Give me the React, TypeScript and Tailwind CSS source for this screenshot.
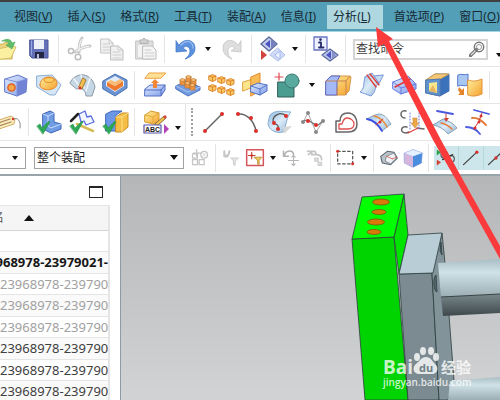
import type { ReactNode } from "react";
import { clsx } from "clsx";

const MENUS = [
  { label: "视图", accel: "V" },
  { label: "插入", accel: "S" },
  { label: "格式", accel: "R" },
  { label: "工具", accel: "T" },
  { label: "装配", accel: "A" },
  { label: "信息", accel: "I" },
  { label: "分析", accel: "L", active: true },
  { label: "首选项", accel: "P" },
  { label: "窗口", accel: "O" },
];

const PARTS = [
  { name: "", tone: "" },
  { name: "968978-23979021-", tone: "font-bold text-neutral-900" },
  { name: "23968978-239790", tone: "text-neutral-400" },
  { name: "23968978-239790", tone: "text-neutral-400" },
  { name: "23968978-239790", tone: "text-neutral-400" },
  { name: "23968978-239790", tone: "text-neutral-700" },
  { name: "23968978-239790", tone: "text-neutral-700" },
  { name: "23968978-239790", tone: "text-neutral-700" },
];

// Toolbar building blocks
interface ToolProps {
  label: string;
  small?: boolean;
  on?: boolean;
  children: ReactNode;
}

function Tool({ label, small, on, children }: ToolProps) {
  return (
    <button
      type="button"
      aria-label={label}
      className={clsx(
        "flex h-6 shrink-0 items-center justify-center",
        !small && "w-[33px]",
        small && !on && "w-6",
        on && "w-[25px] border-r border-[#b5d8e0] bg-[#cde6ec]"
      )}
    >
      <svg
        viewBox="0 0 24 24"
        className={clsx("shrink-0 overflow-visible", small ? "h-5 w-5" : "h-6 w-6")}
        fill="none"
        strokeLinejoin="round"
        strokeLinecap="round"
      >
        {children}
      </svg>
    </button>
  );
}

function Separator() {
  return (
    <div className="flex w-[7px] shrink-0 justify-center">
      <div className="h-7 w-px bg-neutral-200" />
    </div>
  );
}

function Drop({ label, className = "w-3.5" }: { label: string; className?: string }) {
  return (
    <button
      type="button"
      aria-label={label}
      className={clsx("flex h-6 shrink-0 items-center justify-center", className)}
    >
      <svg viewBox="0 0 6 4" className="h-1 w-1.5" fill="#111">
        <path d="M0 0h6L3 4z" />
      </svg>
    </button>
  );
}

function Check() {
  return <path d="M0 16l3-2 2 4L12 11l1 1L6 24z" fill="#2fa855" stroke="#1c8a40" strokeWidth=".5" />;
}

function Gradients() {
  return (
    <svg className="absolute h-0 w-0" aria-hidden="true">
      <defs>
        <linearGradient id="blue" x1="0" y1="0" x2="1" y2="1">
          <stop offset="0" stopColor="#e3edff" />
          <stop offset="1" stopColor="#7d9be8" />
        </linearGradient>
        <linearGradient id="gold" x1="0" y1="0" x2="1" y2="1">
          <stop offset="0" stopColor="#fff0a0" />
          <stop offset="1" stopColor="#f5a02c" />
        </linearGradient>
        <linearGradient id="sheet" x1="0" y1="0" x2="1" y2="1">
          <stop offset="0" stopColor="#8db9e0" />
          <stop offset=".5" stopColor="#dcecf8" />
          <stop offset="1" stopColor="#8fb2d6" />
        </linearGradient>
      </defs>
    </svg>
  );
}

function Dot({ x, y, r = 2 }: { x: number; y: number; r?: number }) {
  return <circle cx={x} cy={y} r={r} fill="#d8312b" />;
}

function MiniCube({ x, y }: { x: number; y: number }) {
  return (
    <g transform={`translate(${x} ${y})`} stroke="#d8791f" strokeWidth=".8">
      <path d="M0 2l3.500-1.500L7 2v4L3.500 7.500 0 6z" fill="#fbc763" />
      <path d="M0 2l3.500 1.200L7 2M3.500 3.200v4" />
    </g>
  );
}

function MenuBar() {
  return (
    <nav className="box-content flex h-[29px] shrink-0 items-center gap-[7px] overflow-hidden border-t-2 border-b border-t-neutral-700 border-b-[#a5d5e3] bg-[#549fb8] pl-2.5 text-xs text-[#152a33]">
      {MENUS.map((menu) => (
        <button
          key={menu.accel}
          type="button"
          className={clsx(
            "shrink-0 whitespace-nowrap",
            menu.active ? "h-6 bg-[#aed7e0] pr-3 pl-1.5" : "px-1"
          )}
        >
          {menu.label}(<span className="underline">{menu.accel}</span>)
        </button>
      ))}
    </nav>
  );
}

function StandardBar() {
  return (
    <div className="flex h-[35px] shrink-0 items-center overflow-hidden border-b border-neutral-200">
      <div className="-ml-[11px] flex shrink-0 items-center">
        <Tool label="打开">
          <path d="M0 7h9l2-2 8 3-1 14H0z" fill="#e8d37a" stroke="#cdb75c" />
          <path d="M0 13l17-4 5 1-5 11-17 2z" fill="#fbefa0" stroke="#d4bf68" />
          <path d="M8 4c5-3 9-2 10 2l3-1-3 7-6-4 3-1c-1-3-4-3-7-3z" fill="#62bd68" stroke="#4fa85c" strokeWidth=".6" />
        </Tool>
        <Tool label="保存">
          <path d="M3 3h18v18H5l-2-2z" fill="#6470b8" stroke="#4a549c" />
          <path d="M7 3h10v9H7z" fill="#eef0f8" />
          <path d="M8 15h9v6H8z" fill="#222742" />
          <path d="M10 17h2v4h-2z" fill="#b8bfe0" />
          <path d="M4.500 4v14" stroke="#9aa6e2" />
        </Tool>
        <Separator />
        <Tool label="剪切">
          <path d="M15 1c-2 3-3 8-3 14M23 9c-6 0-10 3-15 6" stroke="#c4c4c4" strokeWidth="3" />
          <path d="M15 2c-2 3-3 7-3 12M22 9.500c-6 0-9 2-13 5" stroke="#f0f0f0" strokeWidth="1.300" />
          <circle cx="4" cy="14" r="2.600" stroke="#bdbdbd" strokeWidth="1.500" />
          <circle cx="11" cy="20" r="2.800" stroke="#bdbdbd" strokeWidth="1.500" />
        </Tool>
        <Tool label="复制">
          <path d="M1 2h8l4 4v10H1z" fill="#f1f1f1" stroke="#c4c4c4" />
          <path d="M9 2v4h4M3 7h6M3 10h8M3 13h7" stroke="#ccc" />
          <path d="M11 9h7l5 4v10H11z" fill="#f1f1f1" stroke="#bbb" />
          <path d="M18 9v4h5M13 15h7M13 18h8M13 21h8" stroke="#ccc" />
        </Tool>
        <Tool label="粘贴">
          <path d="M3 4h17v18H3z" fill="#ddd" stroke="#c4c4c4" />
          <path d="M5 8h13v12H5z" fill="#f4f4f4" />
          <path d="M7 6V3h2l2-2 2 2h2v3z" fill="#d0d0d0" stroke="#b0b0b0" />
          <path d="M10 9h9l4 4v9H10z" fill="#f5f5f5" stroke="#bbb" />
          <path d="M12 13h6M12 16h9M12 19h9" stroke="#ccc" />
        </Tool>
        <Separator />
        <Tool label="撤消">
          <path d="M3 4v11l11-1-4-3c3-3 7-1 7 3 0 3-2 6-5 8 6-2 10-5 10-11C22 3 12 0 6 8z" fill="#5c91dd" stroke="#3c70c4" strokeWidth=".7" />
          <path d="M8 8c5-6 12-4 12 3" stroke="#94b9ee" strokeWidth="1.500" />
        </Tool>
        <Drop label="撤消列表" />
        <Tool label="重做">
          <path d="M21 4v11l-10-1 4-3c-3-3-7-1-7 3 0 3 1 6 4 8-5-2-9-5-9-11C3 3 12 0 18 8z" fill="#dedede" stroke="#c0c0c0" strokeWidth=".7" />
        </Tool>
        <Separator />
        <Tool label="命令重复">
          <path d="M9 0l8 7-8 7-8-7z" fill="#c8d0ec" stroke="#5b699c" strokeWidth="1.500" />
          <path d="M11 2l5 5-5 5z" fill="#7480c0" />
          <path d="M5 7l5-4v8z" fill="#4b52c2" />
          <path d="M18 11l7 7-7 6-8-6z" fill="#cfdaf8" stroke="#b0bfea" />
          <path d="M15 18l5-4v8z" fill="#eef3ff" stroke="#a7b9ee" />
          <path d="M1 13v10l6-5z" fill="#d1433f" />
        </Tool>
        <Drop label="命令列表" />
        <Separator />
        <Tool label="命令信息">
          <path d="M0 0h13v13H0z" fill="#edf0ff" stroke="#6a72c4" strokeWidth="1.300" />
          <path d="M5 5.500h2v5M5 10.500h4.500" stroke="#252a68" strokeWidth="1.800" />
          <circle cx="6.500" cy="2.600" r="1.300" fill="#252a68" />
          <path d="M16 12l8 6-8 6-8-6z" fill="#bcc7ee" stroke="#5b699c" strokeWidth="1.300" />
          <path d="M18 14l4 4-4 4z" fill="#8590cc" />
          <path d="M12 18l5-4v8z" fill="#4b52c2" />
        </Tool>
        <Separator />
      </div>
      <label className="ml-1 flex h-[21px] w-[135px] shrink-0 items-center border-2 border-neutral-300 bg-white px-px">
        <input
          type="text"
          aria-label="查找命令"
          defaultValue="查找命令"
          className="w-0 min-w-0 flex-1 text-xs text-neutral-700 outline-none"
        />
        <svg viewBox="0 0 16 16" className="h-4 w-4 shrink-0" fill="none">
          <path d="M1.500 14.500l6-6" stroke="#777" strokeWidth="3.500" strokeLinecap="round" />
          <path d="M2 14l5-5" stroke="#ddd" strokeWidth="1.300" />
          <circle cx="10" cy="6" r="4.700" stroke="#777" strokeWidth="1.500" />
          <circle cx="10" cy="6" r="2.500" stroke="#999" />
        </svg>
      </label>
      <Drop label="更多" className="ml-1 w-3.5 pt-3" />
    </div>
  );
}

function FeatureBar() {
  return (
    <div className="flex h-[37px] shrink-0 items-center overflow-hidden border-b border-neutral-200">
      <div className="-ml-px flex shrink-0 items-center">
        <Tool label="拉伸">
          <path d="M1 6l13-4 9 4-1 13-9 4-12-4z" fill="url(#blue)" stroke="#6276c8" />
          <path d="M13 9l10-3-1 13-9 4z" fill="#7282d5" />
          <path d="M1 6l12 3v14M13 9l10-3" stroke="#7e94df" />
          <circle cx="7.500" cy="14.500" r="3.600" fill="#f6a84b" stroke="#e25f1d" strokeWidth="1.500" />
        </Tool>
        <Tool label="凸台">
          <path d="M0 3l15-1 9 10-6 10h-5L0 14z" fill="#d5e7f6" stroke="#89aed7" />
          <path d="M3 12c0-4 3-8 9-8 5 0 8 3 8 7 0 7-17 8-17 1z" fill="url(#gold)" stroke="#e6892a" />
          <ellipse cx="12" cy="7" rx="5" ry="2.500" fill="#fccd64" stroke="#e98d2c" />
        </Tool>
        <Tool label="扫掠">
          <path d="M0 10C5-2 22-1 25 14l-3 9h-6c0-6-5-9-9-7z" fill="#c5d7e5" stroke="#8999a6" />
          <path d="M4 6l7 9M11 2l3 13M20 5l-4 13" stroke="#eef4f9" strokeWidth="1.500" />
          <path d="M13 5l3 2-4 9-3-2z" fill="#f1be4c" stroke="#a67a35" />
          <Dot x={10} y={15} r={1.5} />
        </Tool>
        <Tool label="腔体">
          <path d="M0 8l12-7 12 6v8l-12 8-12-7z" fill="#6d93d2" stroke="#4a73b4" />
          <path d="M3 8l9-5 9 5v5l-9 6-9-6z" fill="#e1edf9" />
          <path d="M4 9l8 4 8-5v5l-8 5-8-5z" fill="#ef792d" />
          <path d="M4 9l4-2 4 2 5-3 3 2-8 5z" fill="#f9ba71" />
        </Tool>
        <Separator />
        <Tool label="偏置曲面">
          <path d="M2 5l4-5h17l-5 5z" fill="#fbe096" stroke="#efa144" />
          <path d="M2 16l5-4h15v5l-4 6H2z" fill="url(#blue)" stroke="#5370c4" />
          <path d="M2 17h16l4-5M18 17v5" stroke="#536cc5" />
          <path d="M12 6l4 4h-2v5h-4v-5H8z" fill="#f08835" />
        </Tool>
        <Tool label="阵列特征">
          <path d="M0 13l10-5 14 6v3l-12 6-12-7z" fill="#739bdf" stroke="#4b72c2" />
          <path d="M0 13l12 6 12-5" stroke="#a9c5f4" />
          {[[4, 7], [10, 4], [9, 10], [15, 7], [14, 12]].map(([x, y]) => (
            <g key={`${x}-${y}`} fill="#e99542" stroke="#b86b26" strokeWidth=".6">
              <path d={`M${x} ${y}v5h5v-5z`} />
              <ellipse cx={x + 2.5} cy={y} rx="2.500" ry="1.500" fill="#f8bf72" />
            </g>
          ))}
        </Tool>
        <Tool label="阵列几何">
          <MiniCube x={0} y={1} />
          <MiniCube x={9} y={3} />
          <MiniCube x={18} y={5} />
          <MiniCube x={0} y={11} />
          <MiniCube x={9} y={13} />
          <MiniCube x={18} y={15} />
        </Tool>
        <Tool label="修剪体">
          <path d="M1 9l10-3v8l-10 4z" fill="#fce58b" stroke="#e0a23c" />
          <path d="M9 4l9-4v18l-9 5z" fill="#f8ba55" stroke="#e58c30" />
          <path d="M9 13l7-3 9 2v6l-7 4-9-3z" fill="url(#blue)" stroke="#5371c0" />
          <path d="M9 13l9 3 7-4M18 16v6" stroke="#5878c8" />
        </Tool>
        <Tool label="合并">
          <path d="M3 9h16v15H3z" fill="#4b9c91" stroke="#315e59" />
          <circle cx="17" cy="8" r="7" fill="#5baaa0" stroke="#3b7771" />
          <path d="M4 0v7M0 4h8" stroke="#dc4a50" strokeWidth="1.200" />
        </Tool>
        <Drop label="布尔列表" className="w-[18px]" />
        <Tool label="抽取体">
          <path d="M0 8l5-5h18l2 1-2 14-4 4H0z" fill="url(#gold)" stroke="#d79745" />
          <path d="M0 8l5-5h9l-3 5v14H0z" fill="#a4b9f5" stroke="#5969c9" />
          <path d="M0 8h20l4-5M20 8v14M11 22v-7" stroke="#c78356" />
        </Tool>
        <Tool label="修剪片体">
          <path d="M6 4l7-4 7 10c-5 3-2 8-8 13L1 19c5-4 3-8 5-15z" fill="url(#sheet)" stroke="#799bdc" />
          <path d="M20 10l-5-7 9-1z" fill="#c7dcf2" stroke="#7795d5" />
          <path d="M8 2l9 12M11 1l9 11" stroke="#dc3c37" strokeWidth="1.300" />
        </Tool>
        <Tool label="分割面">
          <path d="M1 9l15-6 8 8v5l-15 5-8-5z" fill="url(#blue)" stroke="#667be0" />
          <path d="M1 9l8 6 15-4M9 15v6" stroke="#667be0" />
          <path d="M3 14l15-8" stroke="#df383b" strokeWidth="1.500" />
        </Tool>
        <Tool label="抽壳">
          <path d="M1 7l9-6h14v17l-9 5-14-3z" fill="#80add5" stroke="#5479ae" />
          <path d="M15 6l9-5v17l-9 5z" fill="#3c72ba" />
          <path d="M1 7l9-6h14l-9 5z" fill="#f3c878" stroke="#d3a04e" />
          <path d="M1 7l14-1v17l-14-3z" fill="#5f93cf" stroke="#5479ae" />
          <path d="M4 10l8-1v11l-8-2z" fill="#f9e78c" />
          <path d="M4 18l4-6 4 8z" fill="#e7b35c" />
        </Tool>
        <Tool label="替换面">
          <path d="M0 2c3-2 7 1 10-1v11c-3 2-7-1-10 1z" fill="#a7c7f2" stroke="#5679d1" />
          <path d="M10 7c5 2 9 1 14-1v15c-5 2-9 3-14 1z" fill="url(#gold)" stroke="#e19139" />
          <path d="M1 14l3 3 2-2v7H0l2-2-2-3z" fill="#e6842c" />
        </Tool>
        <Separator />
        <Tool label="圆角">
          <path d="M3 22V11C3 5 8 1 15 2v10l-4 10z" fill="#a9c4ef" stroke="#5879c5" />
          <path d="M3 10c0-5 5-9 12-8v7l-12 5z" fill="#f6a26d" stroke="#d95934" />
        </Tool>
      </div>
    </div>
  );
}

function CurveBar() {
  return (
    <div className="flex h-[37px] shrink-0 items-center overflow-hidden border-b border-neutral-200">
      <div className="-ml-2 flex shrink-0 items-center">
        <Tool label="标签">
          <path d="M-4 12l18-6 4 3-1 5-18 6-7-4z" fill="#fbedbb" stroke="#d1ad68" />
          <path d="M1 13l12-4M2 16l12-4" stroke="#a88559" strokeWidth="1.300" />
          <path d="M16 9c5-2 8 2 7 9" stroke="#888" />
          <Dot x={16} y={9} r={1.2} />
        </Tool>
        <Separator />
        <Tool label="装配约束">
          <path d="M6 4l7-3 4 2v9l7 2v5l-10 4-8-4z" fill="#709ce4" stroke="#3e64ba" />
          <path d="M6 4l5 2v10l3 2 10-4M11 6l6-3" stroke="#c8ddff" />
          <Check />
        </Tool>
        <Tool label="移动组件">
          <path d="M7 14l16 7" stroke="#d6bc57" strokeWidth="2.500" />
          <path d="M9 4l6-3 2 6 4-1 3 6-8 3-2-4-3 1z" fill="#f4f7ff" stroke="#5a6de2" strokeWidth="1.300" />
          <path d="M1 11l7-7" stroke="#222" strokeWidth="2.500" />
          <Check />
        </Tool>
        <Tool label="添加组件">
          <path d="M3 4l6-3h10l-6 4v16H3z" fill="#6b98e6" stroke="#3c66bb" />
          <path d="M13 7l6-4h6v14l-6 5h-6z" fill="#f4be45" stroke="#c98b28" />
          <path d="M13 7h6l6-4M19 7v15" stroke="#fae191" />
          <Check />
        </Tool>
        <Separator />
        <Tool label="编辑文本">
          <path d="M2 5l6-4 8 2v8l-6 3-8-2z" fill="url(#gold)" stroke="#d49a2b" />
          <path d="M2 5l8 2 6-4M10 7v7" stroke="#e2aa38" />
          <path d="M12 14l9-8 2 2-9 8z" fill="#f1c64e" stroke="#8f6b3a" />
          <path d="M20 7l2-2 2 2-2 2z" fill="#d4453c" />
          <path d="M1 15h17v8H1z" fill="#fff" stroke="#5754a8" strokeWidth="1.200" />
          <path d="M21 14v10l5-5z" fill="#b544b8" />
          <text x="2" y="22" fontSize="7" fontWeight="700" fill="#222" fontFamily="Liberation Sans, sans-serif">ABC</text>
        </Tool>
        <Drop label="文本列表" className="w-3.5 pt-3" />
      </div>
      <div className="flex h-full w-3 shrink-0 items-center justify-center border-l border-neutral-200">
        <div className="h-7 border-l-2 border-dotted border-neutral-400" />
      </div>
      <div className="flex shrink-0 items-center">
        <Tool label="直线">
          <path d="M3 21L20 4" stroke="#666" strokeWidth="1.500" />
          <Dot x={3} y={21} />
          <Dot x={20} y={4} />
        </Tool>
        <Tool label="圆弧">
          <path d="M3 4c9-1 16 7 18 17" stroke="#666" strokeWidth="1.500" />
          <Dot x={3} y={4} />
          <Dot x={16} y={8} />
          <Dot x={21} y={21} />
        </Tool>
        <Tool label="曲面上的曲线">
          <path d="M2 5c6-6 13-3 21-3-5 5-4 13-8 20C8 24 1 20 0 14z" fill="url(#sheet)" stroke="#88add4" />
          <path d="M15 17l9-1-8 8z" fill="#d7d7d7" />
          <path d="M18 6C11 0 2 8 6 13c3 2 5 2 4 6" stroke="#555" strokeWidth="1.300" />
          <Dot x={18} y={6} />
          <Dot x={6} y={13} />
          <Dot x={10} y={19} />
        </Tool>
        <Tool label="艺术样条">
          <path d="M2 12l5-9 8 19 7-11" stroke="#aaa" />
          <path d="M2 12c3-3 5-2 8 0s5 4 7 3 3-3 5-4" stroke="#777" strokeWidth="1.300" />
          <g fill="#888">
            <circle cx="7" cy="3" r="2" />
            <circle cx="22" cy="11" r="2" />
            <circle cx="15" cy="22" r="2" />
            <circle cx="2" cy="12" r="2" />
          </g>
          <Dot x={7} y={11} />
          <Dot x={15} y={15} />
        </Tool>
        <Tool label="偏置曲线">
          <path d="M2 22V11h4c0-6 3-8 8-8 6 0 9 5 9 11s-4 8-9 8z" stroke="#666" strokeWidth="1.500" />
          <path d="M5 19v-5h3c1-2 1-6 5-6s7 3 7 6-2 5-6 5z" stroke="#df4f4c" strokeWidth="1.300" />
        </Tool>
        <Tool label="桥接曲线">
          <path d="M0 9C8 4 9 5 12 4c5 0 8 4 12 10l-9 7C11 14 6 10 0 9z" fill="url(#sheet)" stroke="#8ea3b4" />
          <path d="M0 9c7 1 11 5 15 12" stroke="#3b4fe2" strokeWidth="1.800" />
          <path d="M7 6c6 1 10 5 13 11" stroke="#e78b38" strokeWidth="1.500" />
          <path d="M9 15l7-6" stroke="#d13c35" />
          <Dot x={13} y={12} r={1.5} />
        </Tool>
        <Tool label="组合投影">
          <path d="M6 1C0-1-1 8 5 8M7 17c-6-2-8 6-1 6l3-1M17 18l7 1" stroke="#666" strokeWidth="1.500" />
          <path d="M8 23l10-5" stroke="#de4340" strokeWidth="1.300" />
          <path d="M10 3v16M19 3v16" stroke="#6876e4" strokeDasharray="1 2" />
          <path d="M13 8h4v5h2l-4 5-4-5h2z" fill="#eda948" stroke="#c67c33" strokeWidth=".5" />
        </Tool>
        <Tool label="投影曲线">
          <path d="M0 15l10-6c6 2 11 5 14 9l-9 6C11 19 6 16 0 15z" fill="url(#sheet)" stroke="#89a2b5" />
          <path d="M4 1l16 3" stroke="#4958df" strokeWidth="1.800" />
          <path d="M8 13c5 1 8 3 11 6" stroke="#e57b33" strokeWidth="1.500" />
          <path d="M13 4v5" stroke="#d14138" />
          <path d="M11 8h5l-3 4z" fill="#d14138" />
        </Tool>
        <Tool label="镜像曲线">
          <path d="M8 0l15 4M0 17c6 0 11 3 14 7" stroke="#4d5be1" strokeWidth="1.800" />
          <path d="M6 8c6-1 10 3 14 7" stroke="#e27831" strokeWidth="1.800" />
          <path d="M16 3l-3 8-5 8" stroke="#c83d39" />
          <Dot x={15} y={6} r={1.5} />
          <Dot x={13} y={12} r={1.5} />
          <Dot x={9} y={18} r={1.5} />
        </Tool>
      </div>
    </div>
  );
}

function SelectionBar() {
  return (
    <div className="flex h-[35px] shrink-0 items-center overflow-hidden border-b-2 border-[#97a4aa]">
      <div className="flex h-[22px] w-[26px] shrink-0 items-center justify-end border border-l-0 border-neutral-400">
        <Drop label="类型过滤器" className="w-5" />
      </div>
      <div className="relative mr-1 ml-2 flex h-[22px] w-[150px] shrink-0 items-center">
        <select
          aria-label="选择范围"
          className="h-full w-full appearance-none border border-neutral-400 bg-white pl-0.5 text-xs leading-4 text-neutral-800"
        >
          <option>整个装配</option>
        </select>
        <svg viewBox="0 0 8 5" className="pointer-events-none absolute right-1.5 h-[5px] w-2" fill="#111">
          <path d="M0 0h8L4 5z" />
        </svg>
      </div>
      <Tool label="选择组件" small>
        <path d="M3 7h6v5H3zM3 14h6v6H3zM11 14h6v6h-6zM8 2v8M4 6h9" stroke="#c4c4c4" strokeWidth="1.500" />
        <circle cx="17" cy="8" r="4" stroke="#c4c4c4" strokeWidth="1.500" />
        <path d="M15 6l4 4M19 6l-4 4" stroke="#ccc" />
      </Tool>
      <Separator />
      <Tool label="重置过滤器" small>
        <path d="M4 4v6h4M4 9c4 1 6-1 6-5" stroke="#c6c6c6" strokeWidth="2.500" />
        <path d="M12 12h9l-4 4v5l-2-1v-4z" fill="#e4e4e4" stroke="#c8c8c8" />
      </Tool>
      <Tool label="过滤选择" small>
        <path d="M2 2h20v19H2z" fill="#fff" stroke="#d5555c" strokeWidth="1.800" />
        <path d="M8 5v8M4 9h8" stroke="#bd403d" strokeWidth="1.300" />
        <Dot x={8} y={9} r={1.5} />
        <path d="M11 11h9l-3 4v5l-2-1v-4z" fill="#f0c55c" stroke="#b99236" />
      </Tool>
      <Drop label="过滤列表" className="w-3" />
      <Tool label="旋转点" small>
        <path d="M3 4v6h6M4 9c2-7 11-7 11-1" stroke="#b0b0b0" strokeWidth="1.800" />
        <path d="M15 9v12M9 15h12M13 11l2-2 2 2M13 19l2 2 2-2" stroke="#b5b5b5" strokeWidth="1.300" />
      </Tool>
      <Tool label="选择链" small>
        <path d="M3 4h9l2 4H8V5L4 8M13 8c5 0 7 2 7 6" stroke="#c4c4c4" strokeWidth="2" />
        <path d="M12 12h4v4h-4zM16 17h4v4h-4z" fill="#ddd" stroke="#c4c4c4" />
      </Tool>
      <Separator />
      <Tool label="矩形选择" small>
        <path d="M2 4h18v15H2z" stroke="#555" strokeWidth="1.500" strokeDasharray="3 3" />
        <Dot x={2} y={4} r={1.800} />
        <Dot x={20} y={19} r={1.800} />
      </Tool>
      <Drop label="选择方式" className="w-3" />
      <Separator />
      <Tool label="着色" small>
        <path d="M2 10l8-6 8 1 4 7-8 8-10-2z" fill="#bac2c9" stroke="#5d6870" strokeWidth="1.300" />
        <path d="M9 10l9-4 3 6-7 7-6-3z" fill="#eff3f7" stroke="#7b858b" />
        <path d="M9 10l7 3M16 13l5-2" stroke="#d65a52" />
      </Tool>
      <Tool label="透明" small>
        <path d="M2 6l10-4 11 4-1 12-10 5-10-5z" fill="#a4c5f5" stroke="#8197dc" />
        <path d="M12 10l11-4-1 12-10 5z" fill="#4b8ddd" />
        <path d="M2 6l10 4v13l-10-5z" fill="#d5b6dd" />
        <path d="M2 6l10-4 11 4-11 4z" fill="#e3f0ff" />
      </Tool>
      <Separator />
      <div className="ml-0.5 flex shrink-0">
        <Tool label="启用捕捉点" small on>
          <path d="M1 14l5 3-5 4z" fill="#d33d34" />
          <path d="M1 2l5 3-5 4z" fill="#21a444" />
          <circle cx="10" cy="8" r="4" stroke="#555" strokeWidth="1.500" />
          <circle cx="18" cy="13" r="4" stroke="#555" strokeWidth="1.500" />
          <path d="M8 14l12-6" stroke="#333" strokeWidth="1.500" />
          <circle cx="14" cy="12" r="2" fill="#333" />
        </Tool>
        <Tool label="端点" small on>
          <path d="M3 20L19 5" stroke="#444" strokeWidth="1.500" />
          <Dot x={19} y={5} />
        </Tool>
        <Tool label="中点" small on>
          <path d="M3 20L20 4" stroke="#444" strokeWidth="1.500" />
          <Dot x={12} y={12} />
        </Tool>
      </div>
    </div>
  );
}

function PartNavigator() {
  return (
    <aside className="w-[121px] shrink-0 overflow-hidden border-r border-[#8d9ba2] bg-white">
      <div className="flex h-[29px] items-center justify-end pt-0.5 pr-[17px]">
        <button type="button" aria-label="最大化" className="h-3 w-3.5 border border-t-2 border-neutral-800" />
      </div>
      <div className="mr-2.5 overflow-hidden border-t border-r-2 border-neutral-200">
        <table className="w-full table-fixed border-collapse text-[13px]">
          <thead>
            <tr className="h-6 border-b border-neutral-300 bg-neutral-100">
              <th className="p-0 text-left text-xs font-normal text-neutral-600">
                <button type="button" className="-ml-2 flex items-center gap-5">
                  名
                  <svg viewBox="0 0 10 6" className="h-1.5 w-2.5" fill="#111">
                    <path d="M0 6l5-6 5 6z" />
                  </svg>
                </button>
              </th>
            </tr>
          </thead>
          <tbody>
            {PARTS.map((part, index) => (
              <tr
                key={index}
                className="h-[21px] border-b border-neutral-200 odd:bg-white even:h-[22px] even:bg-neutral-50"
              >
                <td className={clsx("p-0 leading-5 whitespace-nowrap", part.tone)}>
                  <div className={clsx("flex", index === 1 && "justify-end")}>{part.name}</div>
                </td>
              </tr>
            ))}
          </tbody>
        </table>
      </div>
    </aside>
  );
}

function ModelView() {
  return (
    <main className="min-w-0 flex-1 overflow-hidden bg-linear-to-b from-[#b5b6b8] to-[#d2d3d4]">
      <svg viewBox="0 0 379 224" preserveAspectRatio="xMinYMin slice" className="h-full w-full">
        <defs>
          <linearGradient id="rod" x1="0" y1="0" x2="0" y2="1">
            <stop offset="0" stopColor="#a9bdc4" />
            <stop offset=".35" stopColor="#cfe2e8" />
            <stop offset="1" stopColor="#9caeb4" />
          </linearGradient>
          <linearGradient id="rodShade" x1="0" y1="0" x2="0" y2="1">
            <stop offset="0" stopColor="#79878b" />
            <stop offset="1" stopColor="#3e484b" />
          </linearGradient>
        </defs>
        <g stroke="#2c3d3d" strokeWidth=".8" strokeLinejoin="round">
          <path d="M231 63l42-2 14 163h-43z" fill="#00d400" />
          <path d="M283 18l4 41-9 39-5-37z" fill="#00e400" />
          <path d="M241 21l42-3-10 43-42 2z" fill="#00ff00" />
          <path d="M278 98l33-1 7 127h-31z" fill="#7b8b91" />
          <path d="M321 57l3 30 9 117-6 20h-9l-7-127z" fill="#82939a" />
          <path d="M287 59l34-2-9 40-34 1z" fill="#b8cdd5" />
          <path d="M315 99c-3 2-3 16 1 17z" fill="#59686e" />
          <path d="M320 66l-1 9 2 4z" fill="#59686e" />
        </g>
        <path d="M317 87l62-4v35l-59 3z" fill="url(#rod)" />
        <path d="M320 121l59-3v19l-57 3z" fill="url(#rodShade)" />
        <path d="M320 121l59-3" stroke="#394447" />
        <path d="M329 205l50-4v23h-52z" fill="url(#rod)" />
        <g fill="#d97a08" stroke="#7a5a10" strokeWidth=".8">
          <ellipse cx="260" cy="26" rx="8.500" ry="3" />
          <ellipse cx="258" cy="36" rx="7" ry="2.500" />
          <ellipse cx="255" cy="46" rx="8.500" ry="3" />
          <ellipse cx="253" cy="56" rx="7" ry="2.500" />
        </g>
        <g fill="#fff" fillOpacity=".8" fontFamily="Open Sans, Noto Sans CJK SC, sans-serif">
          <text x="262" y="198" fontSize="19" fontWeight="700">Bai</text>
          <ellipse cx="296" cy="181" rx="3" ry="4" />
          <ellipse cx="302" cy="175" rx="3" ry="4" />
          <ellipse cx="310" cy="175" rx="3" ry="4" />
          <ellipse cx="315" cy="181" rx="3" ry="4" />
          <path d="M305 181c5 0 6 4 9 7 4 3 3 10-3 10h-13c-6 0-7-7-3-10s5-7 10-7z" />
          <text x="320" y="197" fontSize="15" fontWeight="700">经验</text>
          <text x="262" y="210" fontSize="10" fontWeight="600">jingyan.baidu.com</text>
        </g>
        <text x="298" y="196" fontSize="11" fontWeight="700" fill="#6e7e84" fontFamily="Open Sans, sans-serif">du</text>
      </svg>
    </main>
  );
}

export default function App() {
  return (
    <div className="relative flex h-screen w-full flex-col overflow-hidden bg-white font-['Noto_Sans','Noto_Sans_CJK_SC',sans-serif]">
      <Gradients />
      <MenuBar />
      <StandardBar />
      <FeatureBar />
      <CurveBar />
      <SelectionBar />
      <div className="flex min-h-0 flex-1">
        <PartNavigator />
        <ModelView />
      </div>

      {/* Pointer to the analysis menu */}
      <svg
        viewBox="0 0 500 400"
        preserveAspectRatio="xMinYMin slice"
        className="pointer-events-none absolute inset-0 h-full w-full"
        aria-hidden="true"
      >
        <path d="M376 27l17 12-4 2 52 99 22 40 37 66v13l-44-79-23-40-49-96-6 3z" fill="#fb3a3b" />
      </svg>
    </div>
  );
}
